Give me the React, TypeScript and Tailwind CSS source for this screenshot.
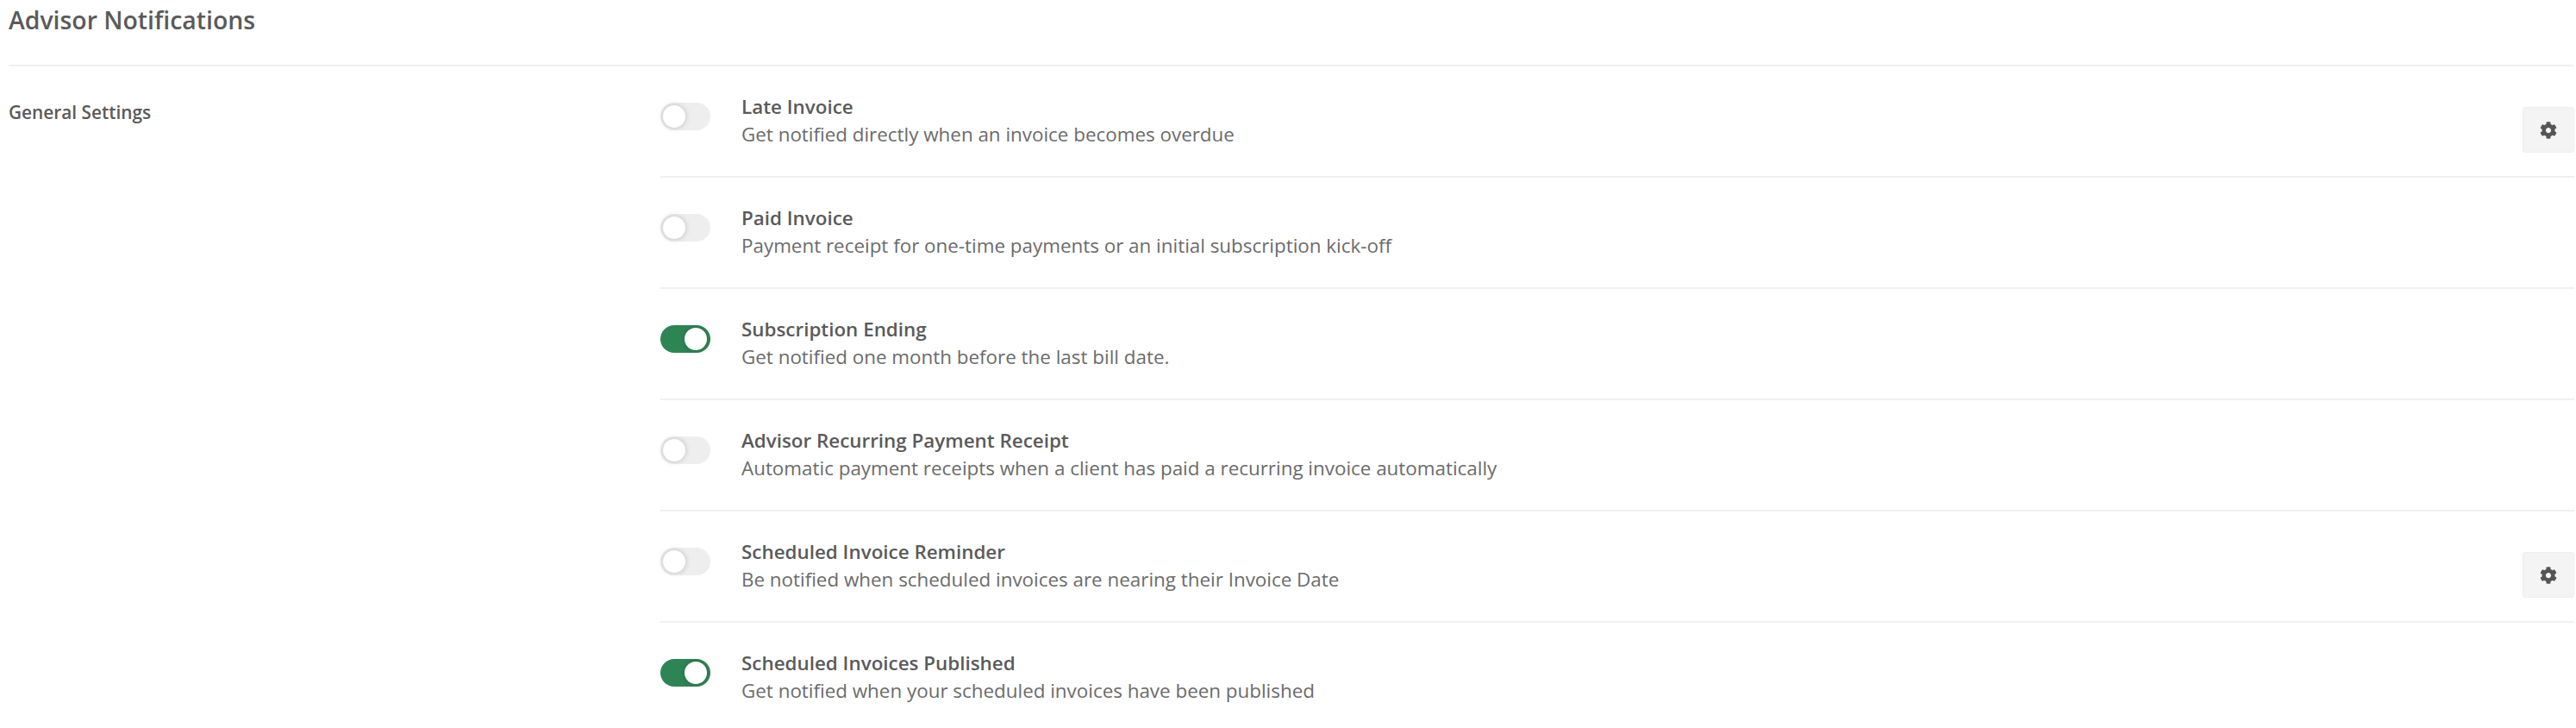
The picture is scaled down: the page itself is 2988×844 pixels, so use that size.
import { FaCog } from "react-icons/fa";

const rows = [
  { title: "Late Invoice", desc: "Get notified directly when an invoice becomes overdue", on: false, gear: true },
  { title: "Paid Invoice", desc: "Payment receipt for one-time payments or an initial subscription kick-off", on: false, gear: false },
  { title: "Subscription Ending", desc: "Get notified one month before the last bill date.", on: true, gear: false },
  { title: "Advisor Recurring Payment Receipt", desc: "Automatic payment receipts when a client has paid a recurring invoice automatically", on: false, gear: false },
  { title: "Scheduled Invoice Reminder", desc: "Be notified when scheduled invoices are nearing their Invoice Date", on: false, gear: true },
  { title: "Scheduled Invoices Published", desc: "Get notified when your scheduled invoices have been published", on: true, gear: false },
];

function Toggle({ on }: { on: boolean }) {
  return (
    <span
      className={`flex h-8 w-[58px] shrink-0 items-center rounded-full ${
        on ? "justify-end bg-[#2e8554] pr-1" : "justify-start bg-[#eeeeee] pl-[3px]"
      }`}
    >
      <span className="h-[26px] w-[26px] rounded-full bg-white shadow-[0_0_6px_rgba(0,0,0,0.22)]" />
    </span>
  );
}

export default function App() {
  return (
    <div className="h-[844px] overflow-hidden bg-white pl-[10px] pr-[2px] font-['Open_Sans',sans-serif] text-[#5a5a5a]">
      <h1 className="flex h-[75px] items-start pt-[4px] text-[28.4px] leading-[38px] font-semibold">Advisor Notifications</h1>
      <div className="flex border-t-2 border-[#f0f0f0]">
        <h2 className="w-[756px] shrink-0 pt-[39px] text-[20.8px] leading-[28px] font-semibold">General Settings</h2>
        <div className="flex-1">
          {rows.map((row) => (
            <div key={row.title} className="flex h-[129px] items-start border-b-2 border-[#f0f0f0] last:border-b-0">
              <div className="mt-[42px]">
                <Toggle on={row.on} />
              </div>
              <div className="ml-[36px] flex-1 pt-[31px]">
                <p className="text-[22.4px] leading-[32px] font-semibold">{row.title}</p>
                <p className="text-[22.4px] leading-[32px] text-[#6b6b6b]">{row.desc}</p>
              </div>
              {row.gear && (
                <button
                  type="button"
                  className="mt-[47px] flex h-[53px] w-[60px] items-center justify-center rounded-[3px] border border-[#eeeeee] bg-[#f4f4f4]"
                  aria-label="Settings"
                >
                  <FaCog className="h-[20px] w-[20px] text-[#555555]" aria-hidden="true" />
                </button>
              )}
            </div>
          ))}
        </div>
      </div>
    </div>
  );
}
